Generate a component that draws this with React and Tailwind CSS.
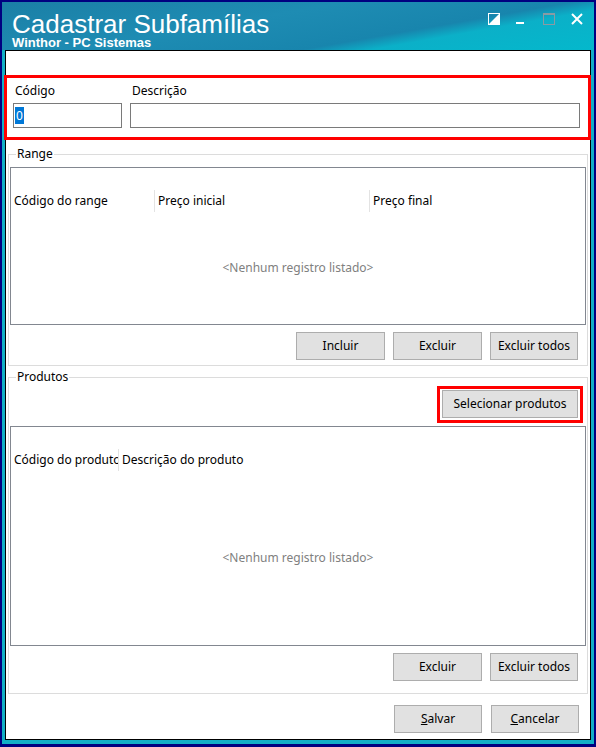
import React from "react";

const ui = "font-['Noto_Sans','DejaVu_Sans',sans-serif] text-[12px]";

function Btn({ w, children }) {
  return (
    <button
      type="button"
      className={`h-[28px] ${w} bg-[#e1e1e1] border border-[#adadad] text-black leading-none`}
    >
      {children}
    </button>
  );
}

function TitleIcons() {
  return (
    <div className="flex items-start pt-[11px] pr-[11px]">
      {/* toggle icon */}
      <svg width="12" height="12" viewBox="0 0 12 12">
        <rect x="0.5" y="0.5" width="11" height="11" fill="none" stroke="#fff" />
        <polygon points="11,1 11,11 1,11" fill="#fff" />
      </svg>
      {/* minimize */}
      <svg width="12" height="12" viewBox="0 0 12 12" className="ml-[14px]">
        <rect x="2" y="9" width="8" height="2" fill="#fff" />
      </svg>
      {/* maximize (disabled) */}
      <svg width="12" height="12" viewBox="0 0 12 12" className="ml-[17px]">
        <rect x="0.5" y="0.5" width="11" height="11" fill="none" stroke="#8a9aa3" />
        <rect x="0" y="0" width="12" height="2" fill="#8a9aa3" />
      </svg>
      {/* close */}
      <svg width="12" height="12" viewBox="0 0 12 12" className="ml-[16px]">
        <path d="M1 1 L11 11 M11 1 L1 11" stroke="#fff" strokeWidth="2" />
      </svg>
    </div>
  );
}

function Grid({ height, cols }) {
  return (
    <div className={`${height} border border-[#828790] bg-white flex flex-col`}>
      <div className="mt-[22px] h-[22px] flex">
        {cols.map((c, i) => (
          <div
            key={i}
            className={`${c.w} h-full pl-[3px] flex items-center overflow-hidden whitespace-nowrap ${
              c.sep ? "border-r border-[#e3e3e3]" : ""
            }`}
          >
            {c.label}
          </div>
        ))}
      </div>
      <div className="flex-1 flex items-center justify-center text-[#808080]">
        &lt;Nenhum registro listado&gt;
      </div>
    </div>
  );
}

export default function App() {
  return (
    <div className={`w-[596px] h-[747px] relative bg-[#000080] border-2 border-b-[3px] border-[#000080] flex flex-col ${ui}`}>
      {/* Title bar */}
      <div className="h-[48px] flex justify-between bg-[linear-gradient(170deg,#1b7fa6_0%,#1e8cb3_40%,#1885ad_66%,#0bb0c8_74%,#04b8cc_100%)]">
        <div className="pl-[10px] text-white font-['Liberation_Sans',Arial,sans-serif]">
          <div className="mt-[11px] text-[26px] leading-[23px] whitespace-nowrap">Cadastrar Subfamílias</div>
          <div className="text-[13px] leading-[13px] font-bold whitespace-nowrap">Winthor - PC Sistemas</div>
        </div>
        <TitleIcons />
      </div>

      {/* Frame + content */}
      <div className="flex-1 bg-[#12afc6] px-[3px] pb-[4px] flex flex-col">
        <div className="flex-1 border border-black bg-white flex flex-col text-black">
          {/* Fields */}
          <div className="mt-[32px] pl-[7px] flex gap-[8px]">
            <div className="w-[109px]">
              <div className="pl-[2px] h-[16px] leading-[16px]">Código</div>
              <div className="mt-[4px] h-[25px] border border-[#7a7a7a] flex items-center pl-[1px]">
                <span className="bg-[#0078d7] text-white leading-[17px] px-[1px]">0</span>
              </div>
            </div>
            <div className="w-[450px]">
              <div className="pl-[2px] h-[16px] leading-[16px]">Descrição</div>
              <div className="mt-[4px] h-[25px] border border-[#7a7a7a]" />
            </div>
          </div>

          {/* Range */}
          <fieldset className="mt-[18px] mx-[2px] border border-[#dcdcdc] px-[1px]">
            <legend className="ml-[6px] px-[1px] leading-[16px]">Range</legend>
            <div className="mt-[5px]">
              <Grid
                height="h-[158px]"
                cols={[
                  { w: "w-[144px]", label: "Código do range", sep: true },
                  { w: "w-[215px]", label: "Preço inicial", sep: true },
                  { w: "flex-1", label: "Preço final" },
                ]}
              />
            </div>
            <div className="mt-[7px] mb-[5px] pr-[8px] flex justify-end gap-[8px]">
              <Btn w="w-[89px]">Incluir</Btn>
              <Btn w="w-[89px]">Excluir</Btn>
              <Btn w="w-[88px]">Excluir todos</Btn>
            </div>
          </fieldset>

          {/* Produtos */}
          <fieldset className="mt-[3px] mx-[2px] border border-[#dcdcdc] px-[1px]">
            <legend className="ml-[6px] px-[1px] leading-[16px]">Produtos</legend>
            <div className="mt-[5px] pr-[8px] flex justify-end">
              <Btn w="w-[136px]">Selecionar produtos</Btn>
            </div>
            <div className="mt-[8px]">
              <Grid
                height="h-[220px]"
                cols={[
                  { w: "w-[108px]", label: "Código do produto", sep: true },
                  { w: "flex-1", label: "Descrição do produto" },
                ]}
              />
            </div>
            <div className="mt-[7px] mb-[12px] pr-[8px] flex justify-end gap-[8px]">
              <Btn w="w-[89px]">Excluir</Btn>
              <Btn w="w-[88px]">Excluir todos</Btn>
            </div>
          </fieldset>

          {/* Footer */}
          <div className="mt-[11px] pr-[11px] flex justify-end gap-[9px]">
            <Btn w="w-[88px]">
              <span className="underline">S</span>alvar
            </Btn>
            <Btn w="w-[88px]">
              <span className="underline">C</span>ancelar
            </Btn>
          </div>
        </div>
      </div>

      {/* Annotation highlights */}
      <div className="absolute left-[2px] top-[73px] w-[587px] h-[65px] border-[3px] border-[#ff0000] pointer-events-none" />
      <div className="absolute left-[435px] top-[384px] w-[146px] h-[37px] border-[3px] border-[#ff0000] pointer-events-none" />
    </div>
  );
}
